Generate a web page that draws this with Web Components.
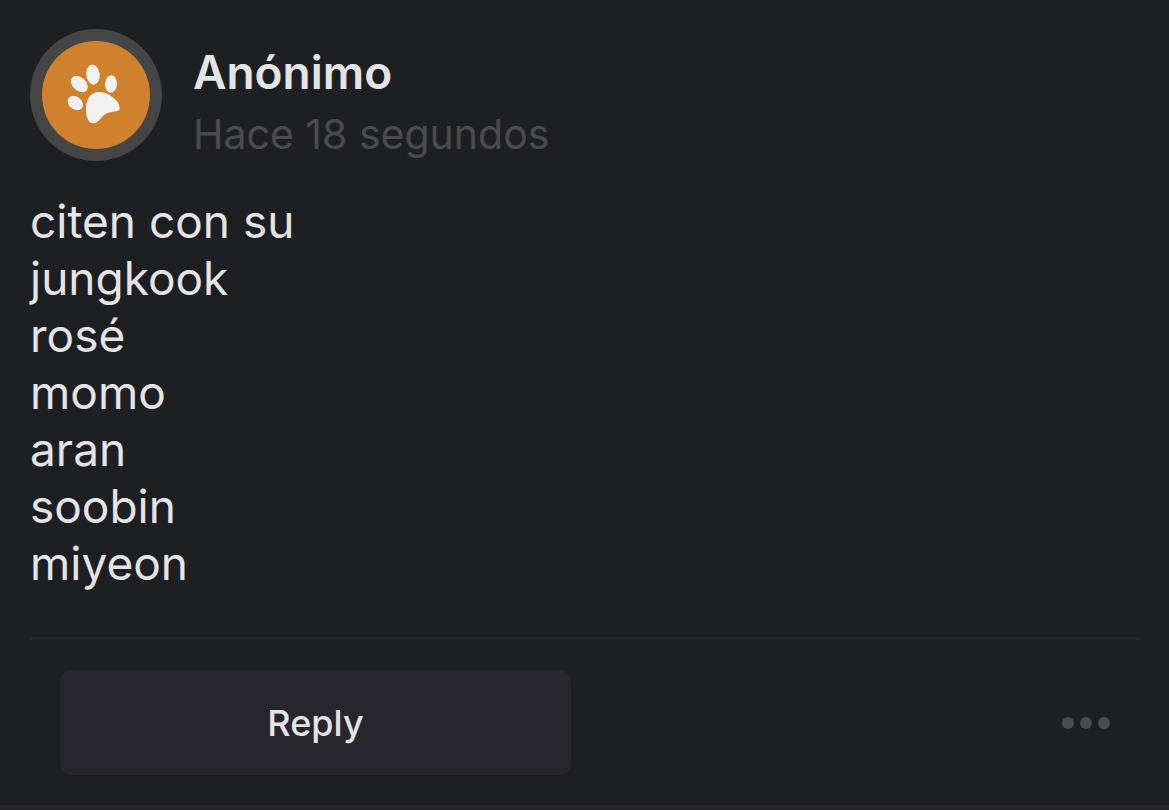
<!DOCTYPE html>
<html lang="es">
<head>
<meta charset="utf-8">
<meta name="viewport" content="width=device-width, initial-scale=1">
<title>Anónimo</title>
<style>
  body {
    margin: 0;
    background: #242328;
    color: #e4e4e7;
    font-family: Inter, "Liberation Sans", sans-serif;
  }
</style>
</head>
<body>
<post-card>
  <paw-avatar slot="avatar"></paw-avatar>
  <span slot="author">Anónimo</span>
  <span slot="time">Hace 18 segundos</span>
  <div>citen con su</div>
  <div>jungkook</div>
  <div>rosé</div>
  <div>momo</div>
  <div>aran</div>
  <div>soobin</div>
  <div>miyeon</div>
  <post-actions slot="actions">Reply</post-actions>
</post-card>

<script>
class PawAvatar extends HTMLElement {
  constructor() {
    super();
    this.attachShadow({ mode: "open" });
    this.shadowRoot.innerHTML = `
      <style>
        :host {
          display: block;
          flex: none;
          box-sizing: border-box;
          width: 132px;
          height: 132px;
          padding: 12px;
          border-radius: 50%;
          background: #454545;
        }
        svg {
          display: block;
          width: 108px;
          height: 108px;
          border-radius: 50%;
          background: #cf812e;
        }
      </style>
      <svg viewBox="0 0 324 324" fill="#f1f1f1" aria-hidden="true">
        <ellipse cx="153" cy="101" rx="20" ry="30" transform="rotate(-7 153 101)"/>
        <ellipse cx="112" cy="129" rx="29" ry="20" transform="rotate(42 112 129)"/>
        <ellipse cx="207" cy="129" rx="18" ry="26" transform="rotate(4 207 129)"/>
        <ellipse cx="100" cy="186" rx="25" ry="19" transform="rotate(38 100 186)"/>
        <path d="M172 153C193 153 217 168 227 184C233 194 236 207 229 209C220 212 208 211 196 216C177 224 171 247 154 247C138 247 131 225 132 200C134 170 149 153 172 153Z"/>
      </svg>`;
  }
}

class PostActions extends HTMLElement {
  constructor() {
    super();
    this.attachShadow({ mode: "open" });
    this.shadowRoot.innerHTML = `
      <style>
        :host {
          display: grid;
          grid-template-columns: 1fr 1fr;
          gap: 28px;
          align-items: center;
          padding: 30px;
          border-top: 3px solid #26262b;
        }
        button {
          border: 0;
          padding: 0;
          color: inherit;
          font-family: inherit;
          cursor: pointer;
        }
        .reply {
          height: 105px;
          border-radius: 12px;
          background: #27262c;
          font-size: 36px;
          font-weight: 500;
          line-height: 44px;
        }
        .more {
          display: flex;
          justify-self: end;
          gap: 6px;
          background: none;
        }
        .more span {
          width: 12px;
          height: 12px;
          border-radius: 50%;
          background: #4b4c4d;
        }
      </style>
      <button class="reply" type="button"><slot></slot></button>
      <button class="more" type="button" aria-label="Más opciones">
        <span></span><span></span><span></span>
      </button>`;
  }
}

class PostCard extends HTMLElement {
  constructor() {
    super();
    this.attachShadow({ mode: "open" });
    this.shadowRoot.innerHTML = `
      <style>
        :host {
          display: block;
          padding: 29px 29px 0 30px;
          background: #1e1f23;
        }
        header {
          display: flex;
          align-items: flex-start;
          gap: 31px;
        }
        .byline {
          padding-top: 15px;
        }
        .author {
          font-size: 46px;
          font-weight: 600;
          line-height: 57px;
        }
        .time {
          color: #4b4b4d;
          font-size: 41px;
          line-height: 66px;
        }
        .text {
          padding: 26px 0 45px;
          font-size: 46px;
          line-height: 57px;
        }
      </style>
      <header>
        <slot name="avatar"></slot>
        <div class="byline">
          <div class="author"><slot name="author"></slot></div>
          <div class="time"><slot name="time"></slot></div>
        </div>
      </header>
      <div class="text"><slot></slot></div>
      <slot name="actions"></slot>`;
  }
}

customElements.define("paw-avatar", PawAvatar);
customElements.define("post-actions", PostActions);
customElements.define("post-card", PostCard);
</script>
</body>
</html>
